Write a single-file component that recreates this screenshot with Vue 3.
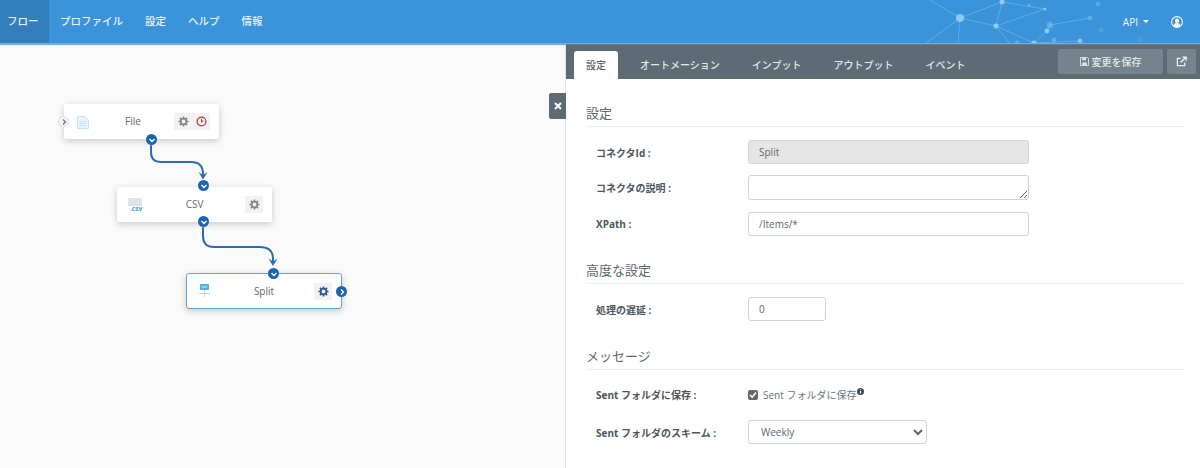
<script setup>
const navItems = ['フロー', 'プロファイル', '設定', 'ヘルプ', '情報']
const tabs = ['設定', 'オートメーション', 'インプット', 'アウトプット', 'イベント']

const nodes = [
  { name: 'File', icon: 'file', x: 64, y: 104, clock: true },
  { name: 'CSV', icon: 'csv', x: 117, y: 187 },
  { name: 'Split', icon: 'split', x: 186, y: 273, active: true },
]

// x, y, radius, opacity of the network picture in the header
const dots = [
  [960, 18, 4, 0.85], [1002, 2, 2.5, 0.85], [996, 26, 2.5, 0.9], [1029, 5, 1.8, 0.4], [1045, 9, 1.5, 0.8],
  [1050, 25, 3.2, 0.4], [1047, 31, 2.4, 0.85], [1034, 43, 2.5, 0.9], [1017, 43, 2.5, 0.4], [1054, 40, 2.5, 0.4],
  [1080, 41, 2.5, 0.75], [1090, 18, 2.5, 0.35], [1098, 4, 2.5, 0.35], [1101, 30, 2.5, 0.2], [1140, 39, 3.5, 0.12],
]
const lines = [
  [960, 18, 1002, 2], [960, 18, 996, 26], [1002, 2, 996, 26], [1002, 2, 1045, 9], [996, 26, 1045, 9],
  [996, 26, 1034, 43], [1034, 43, 1047, 31], [1047, 31, 1050, 25], [1050, 25, 1090, 18], [960, 18, 958, 44],
  [960, 18, 925, 44], [960, 18, 930, 0], [996, 26, 1010, 44], [1034, 43, 1080, 41],
]
</script>

<template>
  <div class="page">
    <header class="nav">
      <svg class="net" width="1200" height="44" viewBox="0 0 1200 44">
        <line v-for="(l, i) in lines" :key="i" :x1="l[0]" :y1="l[1]" :x2="l[2]" :y2="l[3]" stroke="#8cc6ee" stroke-width="0.8" opacity="0.6" />
        <circle v-for="(d, i) in dots" :key="i" :cx="d[0]" :cy="d[1]" :r="d[2]" fill="#9ad2f3" :opacity="d[3]" />
      </svg>
      <a v-for="(item, i) in navItems" :key="item" class="nav-item" :class="{ current: i === 0 }">{{ item }}</a>
      <div class="nav-right">
        <span class="api">API<i class="caret"></i></span>
        <svg class="user" width="12" height="12" viewBox="0 0 16 16">
          <circle cx="8" cy="8" r="7.2" fill="none" stroke="#fff" stroke-width="1.4" />
          <circle cx="8" cy="6.2" r="2.9" fill="#fff" />
          <path d="M3.2 13c.8-2.6 2.6-3.6 4.8-3.6s4 1 4.8 3.6a7 7 0 0 1-9.6 0z" fill="#fff" />
        </svg>
      </div>
    </header>

    <main class="body">
      <section class="canvas">
        <svg class="wires" width="565" height="424" viewBox="0 44 565 424">
          <g fill="none" stroke="#2b6cb8" stroke-width="2" stroke-linecap="round" stroke-linejoin="round">
            <path d="M151 146v6q0 10 10 10h30q12 0 12 12v3" />
            <path d="M203 228v8q0 11 11 11h46q13 0 13 12v4" />
          </g>
          <path d="M198.500 172l4.500 7.500 4.500-7.500-4.500 3z" fill="#2b6cb8" />
          <path d="M268.500 258.500l4.500 7.500 4.500-7.500-4.500 3z" fill="#2b6cb8" />
        </svg>

        <div
          v-for="n in nodes"
          :key="n.name"
          class="node"
          :class="{ active: n.active, 'has-clock': n.clock }"
          :style="{ left: n.x + 'px', top: n.y + 'px' }"
        >
          <svg v-if="n.icon === 'file'" class="node-icon" width="12" height="13" viewBox="0 0 12 13">
            <path d="M.5.5h7.500l3.500 3.500v8.500H.5z" fill="#e8f4fc" stroke="#c4e3f6" />
            <path d="M2.500 5.500h7M2.500 7.500h7M2.500 9.500h7" stroke="#c4e3f6" />
          </svg>
          <span v-else-if="n.icon === 'csv'" class="csv-icon"><b>.csv</b></span>
          <svg v-else class="node-icon split" width="11" height="13" viewBox="0 0 11 13">
            <rect x="1" y="0" width="9" height="6" fill="#55b0e6" />
            <path d="M3 3h5" stroke="#d8eefa" />
            <path d="M5.500 6v7M0 9.500h11" stroke="#ccd3da" />
          </svg>
          <span class="node-name">{{ n.name }}</span>
          <div class="node-tools">
            <span class="tool" :class="{ blue: n.active }">
              <svg width="11" height="11" viewBox="0 0 12 12">
                <circle cx="6" cy="6" r="3.100" fill="none" :stroke="n.active ? '#2c5a9e' : '#83878b'" stroke-width="2" />
                <path d="M6 .5v2M6 9.500v2M.5 6h2M9.500 6h2M2.100 2.100l1.400 1.400M8.500 8.500l1.400 1.400M2.100 9.900l1.400-1.400M8.500 3.500l1.400-1.400" :stroke="n.active ? '#2c5a9e' : '#83878b'" stroke-width="1.800" />
              </svg>
            </span>
            <span v-if="n.clock" class="tool">
              <svg width="11" height="11" viewBox="0 0 12 12">
                <circle cx="6" cy="6" r="4.800" fill="none" stroke="#a5443f" stroke-width="1.400" />
                <path d="M6 3v3.200l2-1" fill="none" stroke="#a5443f" stroke-width="1.100" />
              </svg>
            </span>
          </div>
        </div>

        <span class="port ghost" style="left: 58px; top: 116px">
          <svg width="8" height="8" viewBox="0 0 8 8"><path d="M3 1.500L5.500 4 3 6.500" /></svg>
        </span>
        <span class="port" style="left: 146px; top: 134px"><svg width="8" height="8" viewBox="0 0 8 8"><path d="M1.500 3L4 5.500 6.500 3" /></svg></span>
        <span class="port" style="left: 198px; top: 180px"><svg width="8" height="8" viewBox="0 0 8 8"><path d="M1.500 3L4 5.500 6.500 3" /></svg></span>
        <span class="port" style="left: 198px; top: 216px"><svg width="8" height="8" viewBox="0 0 8 8"><path d="M1.500 3L4 5.500 6.500 3" /></svg></span>
        <span class="port" style="left: 268px; top: 268px"><svg width="8" height="8" viewBox="0 0 8 8"><path d="M1.500 3L4 5.500 6.500 3" /></svg></span>
        <span class="port" style="left: 336px; top: 286px"><svg width="8" height="8" viewBox="0 0 8 8"><path d="M3 1.500L5.500 4 3 6.500" /></svg></span>
      </section>

      <button class="close-btn">
        <svg width="8" height="8" viewBox="0 0 8 8"><path d="M1 1l6 6M7 1L1 7" stroke="#fff" stroke-width="2" /></svg>
      </button>

      <section class="panel">
        <div class="tabbar">
          <a v-for="(t, i) in tabs" :key="t" class="tab" :class="{ current: i === 0 }">{{ t }}</a>
          <div class="tab-actions">
            <button class="bar-btn save">
              <svg width="9" height="9" viewBox="0 0 10 10">
                <path d="M.5.5h7.500l1.500 1.500v7.500H.5z" fill="none" stroke="#e6e9eb" />
                <path d="M2.500 1h4v2.500h-4zM2.500 6h5v3h-5z" fill="#e6e9eb" />
              </svg>
              変更を保存
            </button>
            <button class="bar-btn ext">
              <svg width="11" height="11" viewBox="0 0 12 12">
                <path d="M9.500 7v3.500h-8v-8H5" fill="none" stroke="#f0f2f3" stroke-width="1.300" />
                <path d="M5 7l5-5M7 1.200h4v4" fill="none" stroke="#f0f2f3" stroke-width="1.500" />
              </svg>
            </button>
          </div>
        </div>

        <div class="form">
          <h3 class="legend first">設定</h3>
          <div class="field f1">
            <label>コネクタId :</label>
            <input class="ctl readonly" value="Split" readonly />
          </div>
          <div class="field f2">
            <label>コネクタの説明 :</label>
            <textarea class="ctl"></textarea>
          </div>
          <div class="field f3">
            <label>XPath :</label>
            <input class="ctl" value="/Items/*" />
          </div>

          <h3 class="legend second">高度な設定</h3>
          <div class="field f4">
            <label>処理の遅延 :</label>
            <input class="ctl short" value="0" />
          </div>

          <h3 class="legend third">メッセージ</h3>
          <div class="field f5">
            <label>Sent フォルダに保存 :</label>
            <span class="check">
              <span class="box">
                <svg width="8" height="8" viewBox="0 0 8 8"><path d="M1 4l2.200 2.200L7 1.500" fill="none" stroke="#fff" stroke-width="1.500" /></svg>
              </span>
              Sent フォルダに保存
              <svg class="info" width="7" height="7" viewBox="0 0 8 8">
                <circle cx="4" cy="4" r="4" fill="#3d4a54" />
                <path d="M4 3.300v3M4 1.400v1" stroke="#fff" stroke-width="1.300" />
              </svg>
            </span>
          </div>
          <div class="field f6">
            <label>Sent フォルダのスキーム :</label>
            <select class="ctl sel">
              <option>Weekly</option>
            </select>
          </div>
        </div>
      </section>
    </main>
  </div>
</template>

<style>
html,
body {
  margin: 0;
  overflow: hidden;
}
</style>

<style scoped>
.page {
  width: 1200px;
  height: 468px;
  overflow: hidden;
  display: flex;
  flex-direction: column;
  font-family: "Open Sans", "Noto Sans CJK JP", sans-serif;
  font-size: 11px;
  color: #5b6670;
  background: #fff;
}
.nav {
  position: relative;
  height: 43px;
  flex: none;
  display: flex;
  align-items: stretch;
  background: #3b93da;
  border-bottom: 2px solid #6fb0e3;
  overflow: hidden;
}
.net {
  position: absolute;
  left: 0;
  top: 0;
}
.nav-item {
  position: relative;
  display: flex;
  align-items: center;
  padding: 0 11px;
  margin-top: -2px;
  color: #e8f2fb;
  font-size: 10.5px;
  font-weight: 500;
}
.nav-item.current {
  padding: 0 10.5px 0 7px;
  background: #337fbc;
}
.nav-right {
  position: relative;
  margin-left: auto;
  display: flex;
  align-items: center;
  gap: 22px;
  padding-right: 17px;
  color: #f2f8fd;
}
.api {
  font-size: 10px;
  display: flex;
  align-items: center;
  gap: 5px;
}
.caret {
  display: block;
  width: 0;
  height: 0;
  border-left: 3px solid transparent;
  border-right: 3px solid transparent;
  border-top: 3px solid #fff;
}
.body {
  position: relative;
  flex: 1;
  display: flex;
  min-height: 0;
}
.canvas {
  position: relative;
  width: 565px;
  background: #fafafa;
  box-shadow: inset 0 3px 3px -3px rgba(0, 0, 0, 0.12);
}
.wires {
  position: absolute;
  left: 0;
  top: -1px;
}
.canvas .node,
.canvas .port {
  margin-top: -45px;
}
.node {
  position: absolute;
  box-sizing: border-box;
  width: 155px;
  height: 35px;
  padding-bottom: 2px;
  display: flex;
  align-items: center;
  justify-content: center;
  background: #fff;
  border-radius: 2px;
  box-shadow: 0 2px 7px rgba(0, 0, 0, 0.2);
}
.node.has-clock {
  padding-right: 17px;
}
.node.active {
  width: 156px;
  height: 36px;
  padding-bottom: 0;
  border: 1.5px solid #6aa3da;
  border-radius: 3px;
}
.node-name {
  font-size: 10px;
  color: #666;
}
.node-icon {
  position: absolute;
  left: 13px;
  top: 12px;
}
.node-icon.split {
  left: 12px;
  top: 10px;
}
.csv-icon {
  position: absolute;
  left: 11px;
  top: 11px;
  width: 14px;
  height: 13px;
  background: linear-gradient(#dde3ea 60%, transparent 60%);
}
.csv-icon b {
  position: absolute;
  left: 2px;
  bottom: -1px;
  font-size: 6.500px;
  line-height: 7px;
  color: #3f9bd8;
}
.node-tools {
  position: absolute;
  right: 9px;
  top: 9px;
  display: flex;
}
.tool {
  width: 18px;
  height: 17px;
  display: flex;
  align-items: center;
  justify-content: center;
  background: #f2f2f2;
}
.port {
  position: absolute;
  width: 11px;
  height: 11px;
  border-radius: 50%;
  background: #1f62b0;
  display: flex;
  align-items: center;
  justify-content: center;
}
.port svg path {
  fill: none;
  stroke: #fff;
  stroke-width: 1.400px;
}
.port.ghost {
  background: #f4f4f6;
  border: 1px dashed #d4d4d4;
  box-sizing: border-box;
}
.port.ghost svg path {
  stroke: #6a78b8;
}
.close-btn {
  position: absolute;
  left: 549px;
  top: 48px;
  width: 17px;
  height: 26px;
  padding: 0;
  border: 0;
  border-radius: 2px 0 0 2px;
  background: #5d6b74;
  display: flex;
  align-items: center;
  justify-content: center;
}
.panel {
  flex: 1;
  border-left: 1px solid #dfe2e4;
  display: flex;
  flex-direction: column;
  min-width: 0;
}
.tabbar {
  height: 34px;
  flex: none;
  display: flex;
  align-items: flex-end;
  padding-left: 8px;
  background: #5d6b74;
  border-top: 1px solid #6f7b83;
  margin-top: -1px;
}
.tab {
  box-sizing: border-box;
  height: 28px;
  display: flex;
  align-items: center;
  padding: 0 16px 2px;
  color: #e4e8ea;
  font-size: 10px;
  font-weight: 500;
}
.tab.current {
  padding: 0 12px 2px;
  margin-right: 6px;
  background: #fff;
  color: #5b6670;
  border-radius: 3px 3px 0 0;
}
.tab-actions {
  margin-left: auto;
  align-self: flex-start;
  display: flex;
  gap: 4px;
  padding: 4px 4px 0 0;
}
.bar-btn {
  height: 25px;
  border: 0;
  border-radius: 2px;
  background: #75838c;
  color: #e6e9eb;
  font-family: inherit;
  font-size: 10px;
  font-weight: 500;
  display: flex;
  align-items: center;
  justify-content: center;
  gap: 3px;
  padding: 0;
}
.bar-btn.save {
  width: 105px;
}
.bar-btn.ext {
  width: 29px;
}
.form {
  flex: 1;
  padding: 0 16px 0 20px;
}
.legend {
  margin: 0;
  padding-bottom: 3px;
  border-bottom: 1px solid #eceeef;
  font-size: 13px;
  font-weight: 400;
  line-height: 19px;
  color: #5b6670;
}
.legend.first {
  margin-top: 25px;
}
.legend.second {
  margin-top: 25px;
}
.legend.third {
  margin-top: 26px;
}
.field {
  display: grid;
  grid-template-columns: 152px auto;
  justify-content: start;
  align-items: center;
  padding-left: 10px;
}
.field label {
  font-size: 10px;
  font-weight: 700;
  color: #4b5660;
}
.f1 {
  margin-top: 13px;
}
.f2 {
  margin-top: 11px;
}
.f3 {
  margin-top: 12px;
}
.f4 {
  margin-top: 13px;
}
.f5 {
  margin-top: 17px;
}
.f6 {
  margin-top: 18px;
}
.ctl {
  box-sizing: border-box;
  display: block;
  width: 281px;
  height: 24px;
  margin: 0;
  padding: 0 10px;
  border: 1px solid #ced4da;
  border-radius: 3px;
  background: #fff;
  font-family: inherit;
  font-size: 10px;
  color: #5b6670;
  outline: none;
}
textarea.ctl {
  height: 25px;
}
.ctl.readonly {
  background: #e6e6e6;
}
.ctl.short {
  width: 78px;
}
.ctl.sel {
  width: 179px;
  padding: 0 8px;
}
.check {
  display: flex;
  align-items: center;
  gap: 5px;
  font-size: 10px;
  color: #6a747d;
}
.box {
  width: 10px;
  height: 10px;
  border-radius: 2px;
  background: #666a6e;
  display: flex;
  align-items: center;
  justify-content: center;
}
.info {
  margin: -6px 0 0 -4px;
}
</style>
